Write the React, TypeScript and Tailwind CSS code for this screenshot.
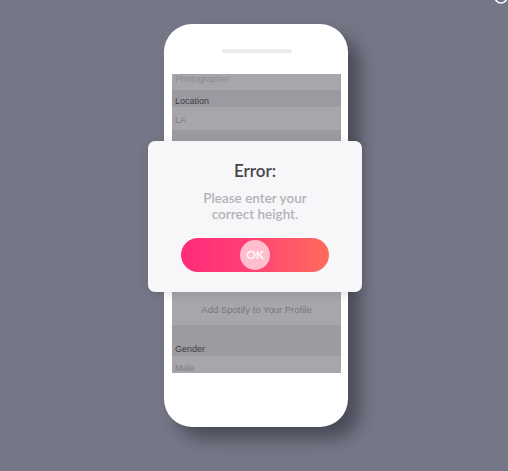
import React from "react";

const screenFont = { fontFamily: '"Liberation Sans", Arial, sans-serif' };
const dialogFont = { fontFamily: 'Lato, "Open Sans", sans-serif' };

const ProfileScreen = () => (
  <div
    className="flex h-[299px] flex-col overflow-hidden bg-[#a8a6aa] text-[9px] leading-[11px]"
    style={screenFont}
  >
    <div className="h-[16px] shrink-0 bg-[#a8a6aa] px-[3px]">
      <div className="text-[#8d8b90]">Photographer</div>
    </div>
    <div className="flex h-[17px] shrink-0 items-end bg-[#9c9aa0] px-[3px] pb-[0px] text-[#3c3b41]">
      Location
    </div>
    <div className="h-[23px] shrink-0 bg-[#a8a6aa] px-[3px] pt-[8px] text-[#807e84]">
      LA
    </div>
    <div className="h-[30px] shrink-0 bg-[#9d9ba0]" />
    <div className="h-[40px] shrink-0 bg-[#a8a6aa]" />
    <div className="h-[30px] shrink-0 bg-[#9d9ba0]" />
    <div className="h-[63px] shrink-0 bg-[#a8a6aa]" />
    <div className="flex h-[32px] shrink-0 items-center justify-center bg-[#a8a6aa] text-[9.5px] text-[#78767c]">
      Add Spotify to Your Profile
    </div>
    <div className="flex h-[31px] shrink-0 items-end bg-[#9d9ba0] px-[3px] pb-[1px] text-[#3c3b41]">
      Gender
    </div>
    <div className="h-[17px] shrink-0 bg-[#a8a6aa] px-[3px] pt-[7px] text-[#807e84]">
      Male
    </div>
  </div>
);

const ErrorDialog = () => (
  <div
    className="absolute left-[148px] top-[141px] flex h-[151px] w-[214px] flex-col items-center rounded-[7px] bg-[#f7f7f9] pt-[19px] shadow-[0_2px_10px_rgba(40,40,50,0.15)]"
    style={dialogFont}
  >
    <div className="text-[17px] font-semibold leading-[22px] text-[#47464b]">
      Error:
    </div>
    <div className="mt-[8px] text-center text-[13.5px] font-semibold leading-[16px] text-[#b3b2b7]">
      Please enter your
      <br />
      correct height.
    </div>
    <button className="relative mt-[16px] flex h-[34px] w-[148px] items-center justify-center rounded-full bg-gradient-to-r from-[#ff2a7b] via-[#ff4272] to-[#ff6b5c]">
      <span className="flex h-[30px] w-[30px] items-center justify-center rounded-full bg-white/65 text-[12px] font-semibold text-white">
        OK
      </span>
    </button>
  </div>
);

export default function App() {
  return (
    <div className="relative h-[471px] w-full overflow-hidden bg-[#757786]">
      <div className="pl-[164px] pt-[24px]">
        <div className="flex h-[403px] w-[184px] flex-col rounded-[28px] bg-white pl-[8px] pr-[7px] shadow-[12px_12px_16px_rgba(25,25,35,0.45)]">
          <div className="mx-auto mt-[25px] h-[4px] w-[70px] rounded-full bg-[#ebebee]" />
          <div className="mt-[21px]">
            <ProfileScreen />
          </div>
        </div>
      </div>

      <ErrorDialog />

      {/* loading ring peeking from the corner */}
      <svg
        className="absolute right-0 top-0"
        width="16"
        height="6"
        viewBox="0 0 16 6"
      >
        <circle cx="9" cy="-3" r="6" fill="none" stroke="white" strokeWidth="1.6" />
      </svg>
    </div>
  );
}
